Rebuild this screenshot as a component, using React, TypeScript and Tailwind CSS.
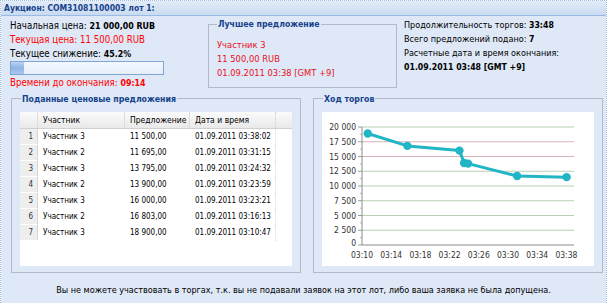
const font = { fontFamily: '"DejaVu Sans Condensed", "DejaVu Sans", sans-serif' };

const bids = [
  { n: 1, who: 'Участник 3', price: '11 500,00', at: '01.09.2011 03:38:02' },
  { n: 2, who: 'Участник 2', price: '11 695,00', at: '01.09.2011 03:31:15' },
  { n: 3, who: 'Участник 3', price: '13 795,00', at: '01.09.2011 03:24:32' },
  { n: 4, who: 'Участник 2', price: '13 900,00', at: '01.09.2011 03:23:59' },
  { n: 5, who: 'Участник 3', price: '16 000,00', at: '01.09.2011 03:23:21' },
  { n: 6, who: 'Участник 2', price: '16 803,00', at: '01.09.2011 03:16:13' },
  { n: 7, who: 'Участник 3', price: '18 900,00', at: '01.09.2011 03:10:47' },
];

// minutes after 03:00 and price
const points: [number, number][] = [
  [10 + 47 / 60, 18900],
  [16 + 13 / 60, 16803],
  [23 + 21 / 60, 16000],
  [23 + 59 / 60, 13900],
  [24 + 32 / 60, 13795],
  [31 + 15 / 60, 11695],
  [38 + 2 / 60, 11500],
];

const X0 = 40;
const Y0 = 133;
const xOf = (m: number) => X0 + (m - 10) * 7.3;
const yOf = (v: number) => Y0 - (v / 20000) * 118;

const yLabel = (v: number) => (v ? `${Math.floor(v / 1000)} ${String(v % 1000).padStart(3, '0')}` : '0');

function Chart() {
  const yTicks = [0, 2500, 5000, 7500, 10000, 12500, 15000, 17500, 20000];
  const xTicks = [10, 14, 18, 22, 26, 30, 34, 38];
  const path = points.map(([m, v], i) => `${i ? 'L' : 'M'}${xOf(m).toFixed(1)} ${yOf(v).toFixed(1)}`).join(' ');
  return (
    <svg width="272" height="154" viewBox="0 0 272 154" className="block">
      {yTicks.slice(1).map((v) => (
        <line key={v} x1={X0} x2={252} y1={yOf(v)} y2={yOf(v)}
          stroke={v === 15000 || v === 17500 ? '#d9b3b8' : '#b9d1b4'} strokeWidth="1" />
      ))}
      {yTicks.map((v) => (
        <g key={'t' + v}>
          <line x1={X0 - 4} x2={X0} y1={yOf(v)} y2={yOf(v)} stroke="#9a9a9a" />
          {v > 0 && <line x1={X0 - 2} x2={X0} y1={yOf(v) + 7.4} y2={yOf(v) + 7.4} stroke="#bbbbbb" />}
          <text x={X0 - 6} y={yOf(v) + (v ? 3 : 1)} textAnchor="end" fontSize="8.5" fill="#333" style={font}>
            {yLabel(v)}
          </text>
        </g>
      ))}
      <line x1={X0} x2={X0} y1={yOf(20000)} y2={Y0} stroke="#8c8c8c" />
      <line x1={X0} x2={252} y1={Y0} y2={Y0} stroke="#8c8c8c" />
      {xTicks.map((m) => (
        <text key={m} x={xOf(m)} y={Y0 + 12.5} textAnchor="middle" fontSize="8.5" fill="#333" style={font}>
          03:{m}
        </text>
      ))}
      <path d={path} fill="none" stroke="#22b5c6" strokeWidth="3" strokeLinejoin="round" />
      {points.map(([m, v]) => (
        <circle key={m} cx={xOf(m)} cy={yOf(v)} r="4.2" fill="#22b5c6" />
      ))}
    </svg>
  );
}

export default function App() {
  return (
    <div className="w-[611px] h-[303px] bg-white text-black overflow-hidden" style={font}>
      <div className="w-[607px] h-[303px] flex flex-col border-l border-r border-t border-dotted border-[#99bbe8]">
        {/* header */}
        <div className="h-[15px] shrink-0 flex items-center pl-[3px] border-b border-[#99bbe8] bg-gradient-to-b from-[#e3ecf8] to-[#c9daf0]">
          <span className="text-[8.5px] font-bold text-[#15428b] leading-none">Аукцион: COM31081100003 лот 1:</span>
        </div>

        <div className="flex-1 bg-[#dfe8f6] flex flex-col">
          {/* top info */}
          <div className="flex h-[74px] shrink-0 leading-[14px]">
            <div className="w-[207px] shrink-0 pl-[9px] pt-[3px] text-[9.6px]">
              <div>Начальная цена: <b className="text-[8.8px]">21 000,00 RUB</b></div>
              <div className="text-[#ff0000]">Текущая цена: 11 500,00 RUB</div>
              <div>Текущее снижение: <b className="text-[8.8px]">45.2%</b></div>
              <div className="w-[154px] h-[14px] border border-[#7fa6d6] bg-gradient-to-b from-[#f4f8fd] to-[#e6eef9]">
                <div className="w-[13px] h-full bg-gradient-to-b from-[#b9d2f1] via-[#8db3e6] to-[#a9c8ef]" />
              </div>
              <div className="text-[#ff0000] mt-[1px]">Времени до окончания: <b className="text-[8.8px]">09:14</b></div>
            </div>

            <fieldset className="w-[189px] h-[70px] shrink-0 mt-[2px] border border-[#b5b8c8] px-[8px]">
              <legend className="px-[1px] text-[8.7px] leading-[13px] font-bold text-[#15428b]">Лучшее предложение</legend>
              <div className="pt-[7px] text-[9.3px] leading-[14px] text-[#e8101c]">
                <div>Участник 3</div>
                <div>11 500,00 RUB</div>
                <div>01.09.2011 03:38 [GMT +9]</div>
              </div>
            </fieldset>

            <div className="pl-[7px] pt-[2px] text-[9px]">
              <div>Продолжительность торгов: <b className="text-[8.7px]">33:48</b></div>
              <div>Всего предложений подано: <b className="text-[8.7px]">7</b></div>
              <div>Расчетные дата и время окончания:</div>
              <div className="font-bold text-[8.7px]">01.09.2011 03:48 [GMT +9]</div>
            </div>
          </div>

          {/* bids + chart */}
          <div className="flex gap-[12px] pl-[10px]">
            <fieldset className="w-[290px] h-[183px] border border-[#b5b8c8] px-[8px]">
              <legend className="ml-[1px] px-[1px] pt-[3px] text-[8.7px] leading-[13px] font-bold text-[#15428b]">
                Поданные ценовые предложения
              </legend>
              <div className="mt-[6px] h-[154px] bg-white text-[8px]">
                <div className="flex h-[17px] items-center border-b border-[#d0d0d0] bg-gradient-to-b from-[#fbfbfb] to-[#e9e9e9] text-[8.5px]">
                  <div className="w-[18px] h-full border-r border-[#dcdcdc]" />
                  <div className="w-[87px] h-full pl-[5px] flex items-center border-r border-[#dcdcdc]">Участник</div>
                  <div className="w-[65px] h-full pl-[5px] flex items-center border-r border-[#dcdcdc]">Предложение</div>
                  <div className="w-[86px] h-full pl-[5px] flex items-center border-r border-dotted border-[#cfcfcf]">Дата и время</div>
                </div>
                {bids.map((b) => (
                  <div key={b.n} className="flex h-[16px] items-center">
                    <div className="w-[18px] h-full pr-[4px] flex items-center justify-end bg-[#eeeeee] border-r border-[#d6d6d6] border-b border-b-white text-[#333]">
                      {b.n}
                    </div>
                    <div className="w-[87px] pl-[5px]">{b.who}</div>
                    <div className="w-[65px] pl-[5px]">{b.price}</div>
                    <div className="w-[86px] h-full pl-[5px] flex items-center border-r border-dotted border-[#dddddd]">{b.at}</div>
                  </div>
                ))}
              </div>
            </fieldset>

            <fieldset className="w-[290px] h-[183px] border border-[#b5b8c8] px-[8px]">
              <legend className="ml-[1px] px-[1px] pt-[3px] text-[8.7px] leading-[13px] font-bold text-[#15428b]">Ход торгов</legend>
              <div className="mt-[6px] h-[154px] bg-white">
                <Chart />
              </div>
            </fieldset>
          </div>

          <div className="flex-1 flex items-center justify-center text-[9px] pt-[5px]">
            Вы не можете участвовать в торгах, т.к. вы не подавали заявок на этот лот, либо ваша заявка не была допущена.
          </div>
        </div>
      </div>
    </div>
  );
}
